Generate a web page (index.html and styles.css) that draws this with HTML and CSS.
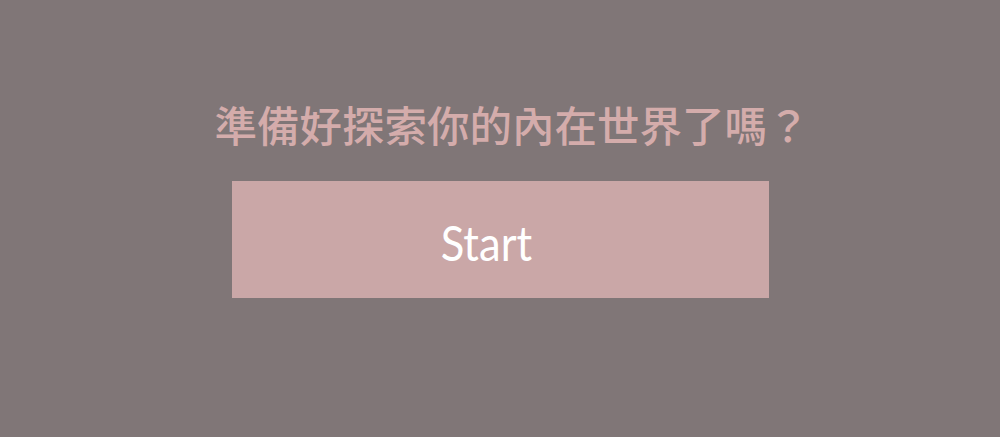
FILE: index.html
```html
<!DOCTYPE html>
<html lang="zh-Hant">
<head>
<meta charset="utf-8">
<link rel="stylesheet" href="styles.css">
</head>
<body>
<main class="page">
  <h1 class="title">準備好探索你的內在世界了嗎？</h1>
  <button class="start"><span class="start-label">Start</span></button>
</main>
</body>
</html>
```
FILE: styles.css
```css
html, body {
  margin: 0;
  padding: 0;
  height: 100%;
}
body {
  background: #807677;
}
.page {
  display: flex;
  flex-direction: column;
  align-items: center;
  padding-top: 96px;
}
.title {
  margin: 0;
  font-family: "Noto Sans CJK TC", "Noto Sans", sans-serif;
  font-weight: 500;
  font-size: 42.5px;
  line-height: 56px;
  color: #d4acab;
  padding-left: 24px;
  white-space: nowrap;
}
.start {
  margin-top: 29px;
  width: 537px;
  height: 117px;
  border: none;
  background: #caa7a7;
  color: #ffffff;
  font-family: "Lato", sans-serif;
  font-size: 49px;
  padding: 0 28px 0 0;
}
.start-label {
  display: inline-block;
  transform: scaleX(0.89);
  position: relative;
  top: 2px;
}
```
